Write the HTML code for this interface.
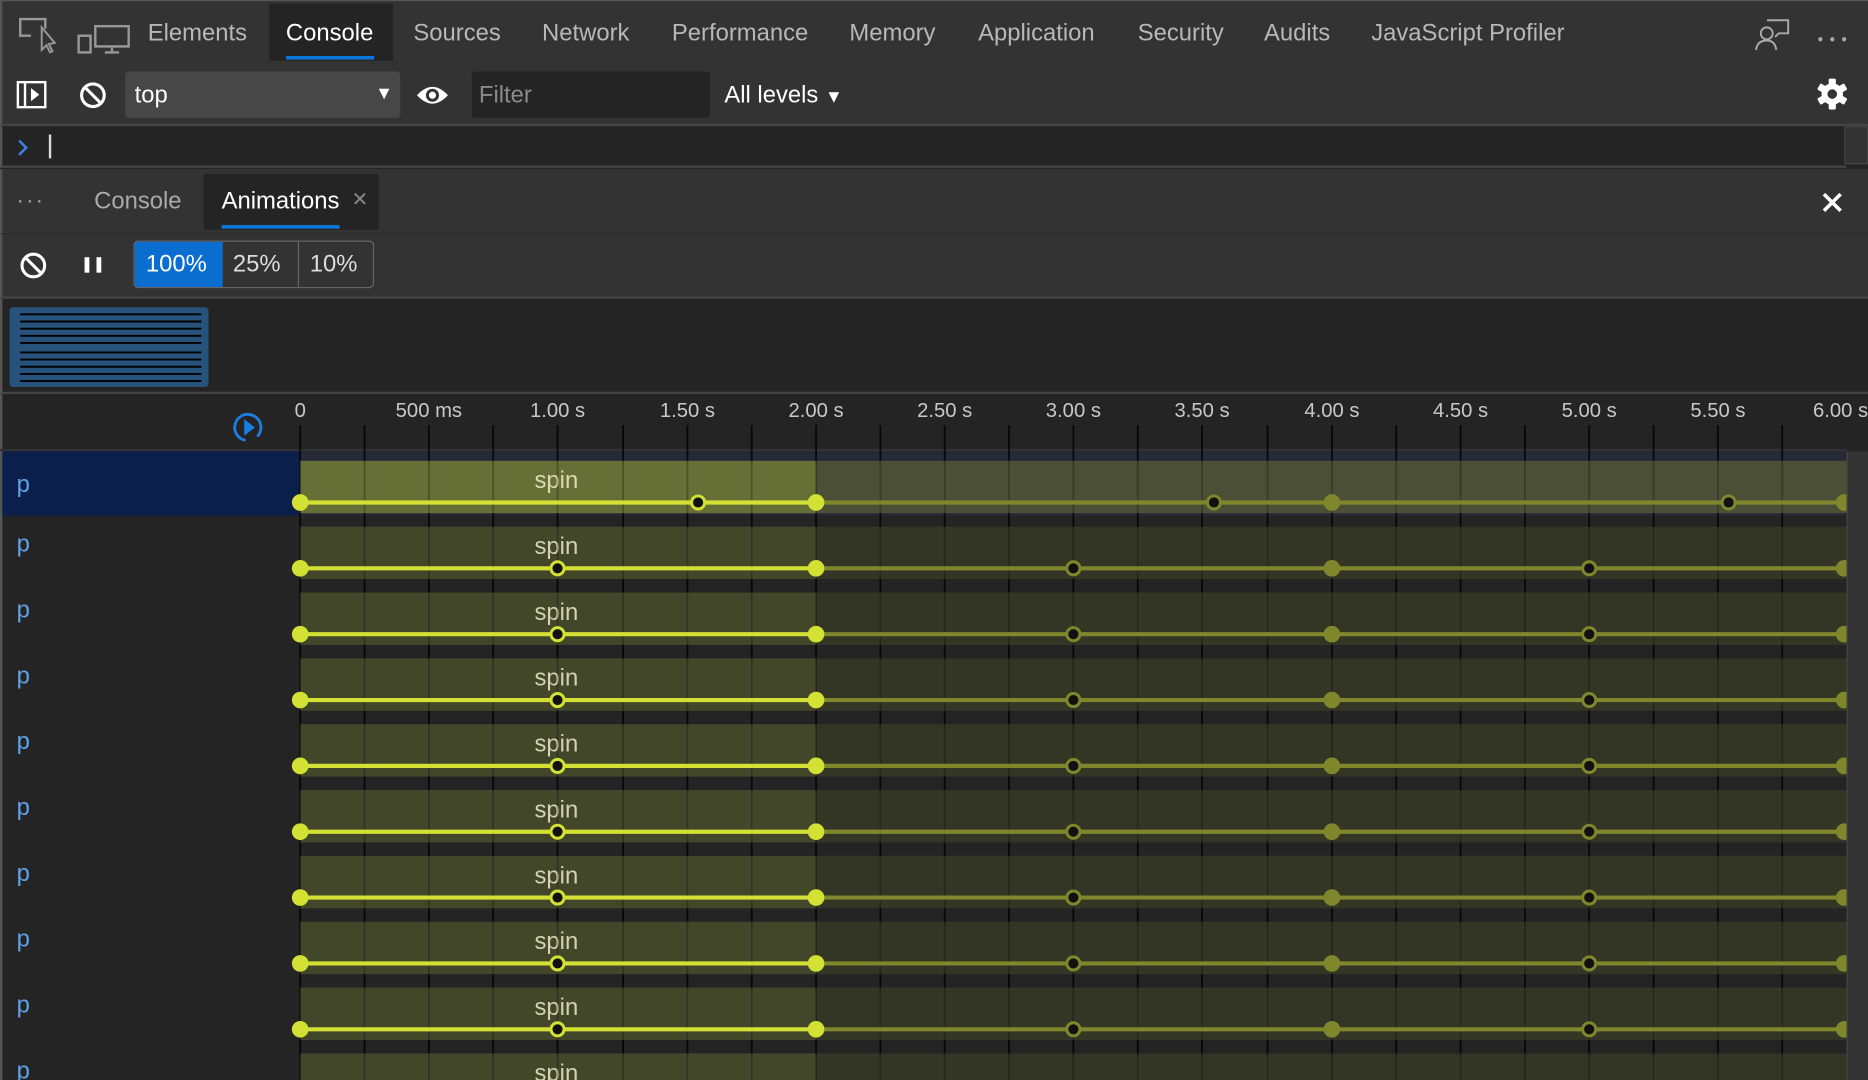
<!DOCTYPE html>
<html><head><meta charset="utf-8"><style>
*{margin:0;padding:0;box-sizing:border-box}
html,body{width:1868px;height:1080px;overflow:hidden;background:#242424}
#w{width:1568px;height:907px;transform:scale(1.19133,1.19074);transform-origin:0 0;position:relative;font-family:"Liberation Sans",sans-serif;color:#bdbdbd}
.a{position:absolute}
.tab{position:absolute;top:2px;height:52px;line-height:52px;font-size:20px;color:#b8b8b8}
</style></head><body><div id="w">
<div class="a" style="left:0;top:0;width:1568px;height:53px;background:#333;border-left:2px solid #555;border-top:1px solid #555"></div>
<svg class="a" style="left:0;top:0" width="110" height="52">
<path d="M26 30 H17 V16 H38 V24" fill="none" stroke="#999" stroke-width="2"/>
<path d="M35 23 L35 42 L39 38 L42 44 L44 43 L41 37 L46 36 Z" fill="none" stroke="#999" stroke-width="1.6"/>
<rect x="80" y="22" width="28" height="17" fill="none" stroke="#999" stroke-width="2"/>
<rect x="66" y="30" width="10" height="14" fill="#333" stroke="#999" stroke-width="2"/>
<path d="M94 40 V44 M88 44 H100" stroke="#999" stroke-width="2"/>
</svg>
<div class="tab" style="left:124px">Elements</div>
<div class="a" style="left:226px;top:3px;width:104px;height:48px;background:#242424"></div>
<div class="tab" style="left:240px;color:#fff">Console</div>
<div class="a" style="left:240px;top:47px;width:74px;height:3px;background:#0a77dd"></div>
<div class="tab" style="left:347px">Sources</div>
<div class="tab" style="left:455px">Network</div>
<div class="tab" style="left:564px">Performance</div>
<div class="tab" style="left:713px">Memory</div>
<div class="tab" style="left:821px">Application</div>
<div class="tab" style="left:955px">Security</div>
<div class="tab" style="left:1061px">Audits</div>
<div class="tab" style="left:1151px">JavaScript Profiler</div>
<svg class="a" style="left:1470px;top:10px" width="90" height="34">
<circle cx="13" cy="18" r="5" fill="none" stroke="#aaa" stroke-width="1.6"/>
<path d="M4 32 Q5 24 13 24 Q20 24 21 32" fill="none" stroke="#aaa" stroke-width="1.6"/>
<path d="M14 8 V7 H31 V18 H23 L20 21" fill="none" stroke="#aaa" stroke-width="1.6"/>
<circle cx="58" cy="23" r="1.8" fill="#aaa"/><circle cx="68" cy="23" r="1.8" fill="#aaa"/><circle cx="78" cy="23" r="1.8" fill="#aaa"/>
</svg>
<div class="a" style="left:0;top:53px;width:1568px;height:53px;background:#333;border-left:2px solid #555;border-bottom:2px solid #444"></div>
<svg class="a" style="left:0;top:53px" width="100" height="53">
<rect x="15" y="16" width="23" height="21" fill="none" stroke="#fff" stroke-width="2"/>
<path d="M21 16 V37" stroke="#fff" stroke-width="2"/><path d="M26 21 L33 26.5 L26 32Z" fill="#fff"/>
<circle cx="78" cy="27" r="9.5" fill="none" stroke="#fff" stroke-width="2.6"/><path d="M71 20 L85 34" stroke="#fff" stroke-width="2.6"/>
</svg>
<div class="a" style="left:105px;top:60px;width:231px;height:39px;background:#474747;border-radius:3px"></div>
<div class="a" style="left:113px;top:69px;font-size:20px;color:#fff">top</div>
<div class="a" style="left:315px;top:70px;font-size:15px;color:#fff">▼</div>
<svg class="a" style="left:348px;top:66px" width="32" height="28"><path d="M2 14 Q15 0 28 14 Q15 28 2 14Z" fill="#fff"/><circle cx="15" cy="14" r="5.5" fill="#333"/><circle cx="15" cy="14" r="3" fill="#fff"/></svg>
<div class="a" style="left:396px;top:60px;width:200px;height:39px;background:#242424;border-radius:3px"></div>
<div class="a" style="left:402px;top:69px;font-size:20px;color:#8a8a8a">Filter</div>
<div class="a" style="left:608px;top:69px;font-size:20px;color:#fff">All levels <span style="font-size:15px">▼</span></div>
<svg class="a" style="left:1524px;top:65px" width="28" height="28" viewBox="-14 -14 28 28"><g fill="#fff"><circle r="9"/><rect x="-3" y="-13" width="6" height="26" rx="1"/><rect x="-3" y="-13" width="6" height="26" rx="1" transform="rotate(60)"/><rect x="-3" y="-13" width="6" height="26" rx="1" transform="rotate(120)"/></g><circle r="4" fill="#333"/></svg>
<div class="a" style="left:0;top:106px;width:1550px;height:35px;background:#242424;border-left:2px solid #555;border-bottom:2px solid #444"></div>
<div class="a" style="left:1548px;top:106px;width:20px;height:32px;background:#333;border:1px solid #444"></div>
<svg class="a" style="left:14px;top:116px" width="12" height="16"><path d="M2 2 L8 8 L2 14" fill="none" stroke="#3b7ce0" stroke-width="2.2"/></svg>
<div class="a" style="left:41px;top:113px;width:2px;height:20px;background:#ddd"></div>
<div class="a" style="left:0;top:142px;width:1568px;height:54px;background:#333;border-left:2px solid #555"></div>
<div class="a" style="left:14px;top:158px;font-size:18px;color:#aaa;letter-spacing:2px">···</div>
<div class="a" style="left:79px;top:158px;font-size:20px;color:#aaa">Console</div>
<div class="a" style="left:171px;top:146px;width:147px;height:47px;background:#242424;border-radius:2px"></div>
<div class="a" style="left:186px;top:158px;font-size:20px;color:#fff">Animations</div>
<div class="a" style="left:295px;top:158px;font-size:17px;color:#888">✕</div>
<div class="a" style="left:186px;top:189px;width:99px;height:3px;background:#0a77dd"></div>
<svg class="a" style="left:1528px;top:160px" width="20" height="20"><path d="M3 3L17 17M17 3L3 17" stroke="#fff" stroke-width="3"/></svg>
<div class="a" style="left:0;top:196px;width:1568px;height:55px;background:#333;border-left:2px solid #555;border-bottom:2px solid #444;border-top:1px solid #2d2d2d"></div>
<svg class="a" style="left:0;top:196px" width="100" height="53"><circle cx="28" cy="27" r="9.5" fill="none" stroke="#fff" stroke-width="2.6"/><path d="M21 20 L35 34" stroke="#fff" stroke-width="2.6"/><rect x="71" y="20" width="4" height="13" fill="#fff"/><rect x="81" y="20" width="4" height="13" fill="#fff"/></svg>
<div class="a" style="left:112px;top:202px;width:202px;height:40px;border:1px solid #666;border-radius:4px;overflow:hidden;font-size:20px;color:#ddd">
<div class="a" style="left:0;top:0;width:74px;height:40px;background:#0a6ed1;color:#fff;line-height:39px;text-align:center;text-indent:-4px">100%</div>
<div class="a" style="left:74px;top:0;width:64px;height:40px;line-height:39px;text-align:center;border-right:1px solid #666;text-indent:-6px">25%</div>
<div class="a" style="left:138px;top:0;width:62px;height:40px;line-height:39px;text-align:center;text-indent:-4px">10%</div></div>
<div class="a" style="left:0;top:251px;width:1568px;height:80px;background:#242424;border-left:2px solid #555;border-bottom:2px solid #444"></div>
<svg class="a" style="left:0;top:251px" width="200" height="80"><rect x="8" y="7" width="167" height="67" rx="3" fill="#27527c"/>
<g stroke="#000" stroke-width="1.6"><path d="M17 15H169M17 21H169M17 27H169M17 33H169M17 39H169M17 47H169M17 53H169M17 59H169M17 65H169M17 71H169" transform="translate(0,-2)"/></g></svg>
<svg class="a" style="left:0;top:331px" width="1568" height="576" font-family="Liberation Sans, sans-serif">
<defs><path id="gl" d="M252 26V576M306 26V576M360 26V576M414 26V576M468 26V576M523 26V576M577 26V576M631 26V576M685 26V576M739 26V576M793 26V576M847 26V576M901 26V576M955 26V576M1009 26V576M1064 26V576M1118 26V576M1172 26V576M1226 26V576M1280 26V576M1334 26V576M1388 26V576M1442 26V576M1496 26V576"/></defs>
<rect x="0" y="0" width="1568" height="576" fill="#242424"/>
<rect x="0" y="0" width="2" height="576" fill="#555"/>
<g fill="#c8c8c8" font-size="17" text-anchor="middle">
<text x="252" y="19">0</text><text x="360" y="19">500 ms</text><text x="468" y="19">1.00 s</text><text x="577" y="19">1.50 s</text><text x="685" y="19">2.00 s</text><text x="793" y="19">2.50 s</text><text x="901" y="19">3.00 s</text><text x="1009" y="19">3.50 s</text><text x="1118" y="19">4.00 s</text><text x="1226" y="19">4.50 s</text><text x="1334" y="19">5.00 s</text><text x="1442" y="19">5.50 s</text><text x="1545" y="19">6.00 s</text></g>
<circle cx="208" cy="28" r="11" fill="none" stroke="#1a7ee0" stroke-width="2.4" stroke-dasharray="58 12" transform="rotate(100 208 28)"/><path d="M205 21 L214 28 L205 35Z" fill="#1a7ee0"/>
<rect x="0" y="46" width="1550" height="2" fill="#333"/>
<rect x="2" y="48" width="250" height="54" fill="#0a1f4a"/>
<rect x="252" y="48" width="1298" height="8" fill="#262a36"/>
<rect x="252" y="92" width="1298" height="10" fill="#262a36"/>
<use href="#gl" stroke="#000" stroke-opacity="0.7" stroke-width="1.5"/>
<g transform="translate(0,48)">
<rect x="252" y="8" width="433" height="44" fill="#666f36"/><rect x="685" y="8" width="865" height="44" fill="#4a4f36"/>
<text x="467" y="31" fill="#d8dcb0" font-size="20" text-anchor="middle">spin</text>
</g>
<g>
<g transform="translate(0,103.3)"><rect x="252" y="8" width="433" height="44" fill="#43472a"/><rect x="685" y="8" width="865" height="44" fill="#343625"/><text x="467" y="31" fill="#d0d4b0" font-size="20" text-anchor="middle">spin</text><text x="14" y="29" fill="#5ea2e8" font-size="20">p</text></g>
<g transform="translate(0,158.6)"><rect x="252" y="8" width="433" height="44" fill="#43472a"/><rect x="685" y="8" width="865" height="44" fill="#343625"/><text x="467" y="31" fill="#d0d4b0" font-size="20" text-anchor="middle">spin</text><text x="14" y="29" fill="#5ea2e8" font-size="20">p</text></g>
<g transform="translate(0,213.9)"><rect x="252" y="8" width="433" height="44" fill="#43472a"/><rect x="685" y="8" width="865" height="44" fill="#343625"/><text x="467" y="31" fill="#d0d4b0" font-size="20" text-anchor="middle">spin</text><text x="14" y="29" fill="#5ea2e8" font-size="20">p</text></g>
<g transform="translate(0,269.2)"><rect x="252" y="8" width="433" height="44" fill="#43472a"/><rect x="685" y="8" width="865" height="44" fill="#343625"/><text x="467" y="31" fill="#d0d4b0" font-size="20" text-anchor="middle">spin</text><text x="14" y="29" fill="#5ea2e8" font-size="20">p</text></g>
<g transform="translate(0,324.5)"><rect x="252" y="8" width="433" height="44" fill="#43472a"/><rect x="685" y="8" width="865" height="44" fill="#343625"/><text x="467" y="31" fill="#d0d4b0" font-size="20" text-anchor="middle">spin</text><text x="14" y="29" fill="#5ea2e8" font-size="20">p</text></g>
<g transform="translate(0,379.8)"><rect x="252" y="8" width="433" height="44" fill="#43472a"/><rect x="685" y="8" width="865" height="44" fill="#343625"/><text x="467" y="31" fill="#d0d4b0" font-size="20" text-anchor="middle">spin</text><text x="14" y="29" fill="#5ea2e8" font-size="20">p</text></g>
<g transform="translate(0,435.1)"><rect x="252" y="8" width="433" height="44" fill="#43472a"/><rect x="685" y="8" width="865" height="44" fill="#343625"/><text x="467" y="31" fill="#d0d4b0" font-size="20" text-anchor="middle">spin</text><text x="14" y="29" fill="#5ea2e8" font-size="20">p</text></g>
<g transform="translate(0,490.4)"><rect x="252" y="8" width="433" height="44" fill="#43472a"/><rect x="685" y="8" width="865" height="44" fill="#343625"/><text x="467" y="31" fill="#d0d4b0" font-size="20" text-anchor="middle">spin</text><text x="14" y="29" fill="#5ea2e8" font-size="20">p</text></g>
<g transform="translate(0,545.7)"><rect x="252" y="8" width="433" height="44" fill="#43472a"/><rect x="685" y="8" width="865" height="44" fill="#343625"/><text x="467" y="31" fill="#d0d4b0" font-size="20" text-anchor="middle">spin</text><text x="14" y="29" fill="#5ea2e8" font-size="20">p</text></g>
</g>
<text x="14" y="82" fill="#5ea2e8" font-size="20">p</text>
<use href="#gl" stroke="#000" stroke-opacity="0.25" stroke-width="1.5"/>
<!-- keyframes -->
<g transform="translate(0,48)">
<line x1="252" y1="43" x2="685" y2="43" stroke="#d3e034" stroke-width="3.5"/><line x1="685" y1="43" x2="1550" y2="43" stroke="#7f862c" stroke-width="3.5"/>
<circle cx="252" cy="43" r="7" fill="#d3e034"/><circle cx="586" cy="43" r="5.5" fill="#111" stroke="#d3e034" stroke-width="2.5"/><circle cx="685" cy="43" r="7" fill="#d3e034"/>
<circle cx="1019" cy="43" r="5.5" fill="#111" stroke="#7f862c" stroke-width="2.5"/><circle cx="1118" cy="43" r="7" fill="#7f862c"/><circle cx="1451" cy="43" r="5.5" fill="#111" stroke="#7f862c" stroke-width="2.5"/><circle cx="1548" cy="43" r="7" fill="#7f862c"/></g>
<g transform="translate(0,103.3)"><line x1="252" y1="43" x2="685" y2="43" stroke="#d3e034" stroke-width="3.5"/><line x1="685" y1="43" x2="1550" y2="43" stroke="#7f862c" stroke-width="3.5"/><circle cx="252" cy="43" r="7" fill="#d3e034"/><circle cx="468" cy="43" r="5.5" fill="#111" stroke="#d3e034" stroke-width="2.5"/><circle cx="685" cy="43" r="7" fill="#d3e034"/><circle cx="901" cy="43" r="5.5" fill="#111" stroke="#7f862c" stroke-width="2.5"/><circle cx="1118" cy="43" r="7" fill="#7f862c"/><circle cx="1334" cy="43" r="5.5" fill="#111" stroke="#7f862c" stroke-width="2.5"/><circle cx="1548" cy="43" r="7" fill="#7f862c"/></g>
<g transform="translate(0,158.6)"><line x1="252" y1="43" x2="685" y2="43" stroke="#d3e034" stroke-width="3.5"/><line x1="685" y1="43" x2="1550" y2="43" stroke="#7f862c" stroke-width="3.5"/><circle cx="252" cy="43" r="7" fill="#d3e034"/><circle cx="468" cy="43" r="5.5" fill="#111" stroke="#d3e034" stroke-width="2.5"/><circle cx="685" cy="43" r="7" fill="#d3e034"/><circle cx="901" cy="43" r="5.5" fill="#111" stroke="#7f862c" stroke-width="2.5"/><circle cx="1118" cy="43" r="7" fill="#7f862c"/><circle cx="1334" cy="43" r="5.5" fill="#111" stroke="#7f862c" stroke-width="2.5"/><circle cx="1548" cy="43" r="7" fill="#7f862c"/></g>
<g transform="translate(0,213.9)"><line x1="252" y1="43" x2="685" y2="43" stroke="#d3e034" stroke-width="3.5"/><line x1="685" y1="43" x2="1550" y2="43" stroke="#7f862c" stroke-width="3.5"/><circle cx="252" cy="43" r="7" fill="#d3e034"/><circle cx="468" cy="43" r="5.5" fill="#111" stroke="#d3e034" stroke-width="2.5"/><circle cx="685" cy="43" r="7" fill="#d3e034"/><circle cx="901" cy="43" r="5.5" fill="#111" stroke="#7f862c" stroke-width="2.5"/><circle cx="1118" cy="43" r="7" fill="#7f862c"/><circle cx="1334" cy="43" r="5.5" fill="#111" stroke="#7f862c" stroke-width="2.5"/><circle cx="1548" cy="43" r="7" fill="#7f862c"/></g>
<g transform="translate(0,269.2)"><line x1="252" y1="43" x2="685" y2="43" stroke="#d3e034" stroke-width="3.5"/><line x1="685" y1="43" x2="1550" y2="43" stroke="#7f862c" stroke-width="3.5"/><circle cx="252" cy="43" r="7" fill="#d3e034"/><circle cx="468" cy="43" r="5.5" fill="#111" stroke="#d3e034" stroke-width="2.5"/><circle cx="685" cy="43" r="7" fill="#d3e034"/><circle cx="901" cy="43" r="5.5" fill="#111" stroke="#7f862c" stroke-width="2.5"/><circle cx="1118" cy="43" r="7" fill="#7f862c"/><circle cx="1334" cy="43" r="5.5" fill="#111" stroke="#7f862c" stroke-width="2.5"/><circle cx="1548" cy="43" r="7" fill="#7f862c"/></g>
<g transform="translate(0,324.5)"><line x1="252" y1="43" x2="685" y2="43" stroke="#d3e034" stroke-width="3.5"/><line x1="685" y1="43" x2="1550" y2="43" stroke="#7f862c" stroke-width="3.5"/><circle cx="252" cy="43" r="7" fill="#d3e034"/><circle cx="468" cy="43" r="5.5" fill="#111" stroke="#d3e034" stroke-width="2.5"/><circle cx="685" cy="43" r="7" fill="#d3e034"/><circle cx="901" cy="43" r="5.5" fill="#111" stroke="#7f862c" stroke-width="2.5"/><circle cx="1118" cy="43" r="7" fill="#7f862c"/><circle cx="1334" cy="43" r="5.5" fill="#111" stroke="#7f862c" stroke-width="2.5"/><circle cx="1548" cy="43" r="7" fill="#7f862c"/></g>
<g transform="translate(0,379.8)"><line x1="252" y1="43" x2="685" y2="43" stroke="#d3e034" stroke-width="3.5"/><line x1="685" y1="43" x2="1550" y2="43" stroke="#7f862c" stroke-width="3.5"/><circle cx="252" cy="43" r="7" fill="#d3e034"/><circle cx="468" cy="43" r="5.5" fill="#111" stroke="#d3e034" stroke-width="2.5"/><circle cx="685" cy="43" r="7" fill="#d3e034"/><circle cx="901" cy="43" r="5.5" fill="#111" stroke="#7f862c" stroke-width="2.5"/><circle cx="1118" cy="43" r="7" fill="#7f862c"/><circle cx="1334" cy="43" r="5.5" fill="#111" stroke="#7f862c" stroke-width="2.5"/><circle cx="1548" cy="43" r="7" fill="#7f862c"/></g>
<g transform="translate(0,435.1)"><line x1="252" y1="43" x2="685" y2="43" stroke="#d3e034" stroke-width="3.5"/><line x1="685" y1="43" x2="1550" y2="43" stroke="#7f862c" stroke-width="3.5"/><circle cx="252" cy="43" r="7" fill="#d3e034"/><circle cx="468" cy="43" r="5.5" fill="#111" stroke="#d3e034" stroke-width="2.5"/><circle cx="685" cy="43" r="7" fill="#d3e034"/><circle cx="901" cy="43" r="5.5" fill="#111" stroke="#7f862c" stroke-width="2.5"/><circle cx="1118" cy="43" r="7" fill="#7f862c"/><circle cx="1334" cy="43" r="5.5" fill="#111" stroke="#7f862c" stroke-width="2.5"/><circle cx="1548" cy="43" r="7" fill="#7f862c"/></g>
<g transform="translate(0,490.4)"><line x1="252" y1="43" x2="685" y2="43" stroke="#d3e034" stroke-width="3.5"/><line x1="685" y1="43" x2="1550" y2="43" stroke="#7f862c" stroke-width="3.5"/><circle cx="252" cy="43" r="7" fill="#d3e034"/><circle cx="468" cy="43" r="5.5" fill="#111" stroke="#d3e034" stroke-width="2.5"/><circle cx="685" cy="43" r="7" fill="#d3e034"/><circle cx="901" cy="43" r="5.5" fill="#111" stroke="#7f862c" stroke-width="2.5"/><circle cx="1118" cy="43" r="7" fill="#7f862c"/><circle cx="1334" cy="43" r="5.5" fill="#111" stroke="#7f862c" stroke-width="2.5"/><circle cx="1548" cy="43" r="7" fill="#7f862c"/></g>
<rect x="1550" y="48" width="18" height="528" fill="#333"/>
<rect x="1550" y="48" width="1" height="528" fill="#444"/>
</svg>
</div></body></html>
